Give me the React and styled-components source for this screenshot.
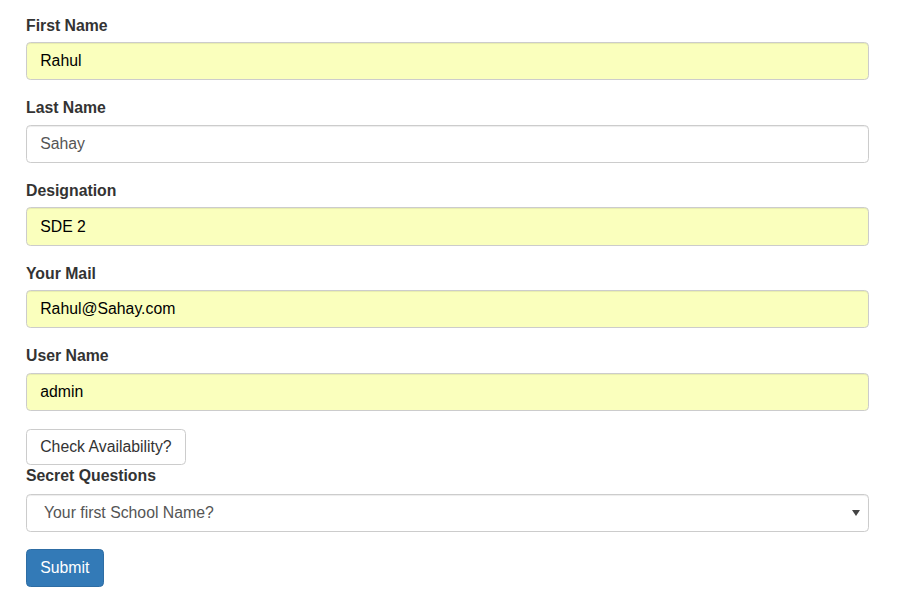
import React from 'react'
import styled, { createGlobalStyle } from 'styled-components'

const GlobalStyle = createGlobalStyle`
body{
  margin:0;
  background:#fff;
  font-family:"Liberation Sans", Arial, sans-serif;
  font-size:15.8px;
  color:#333;
}
*{box-sizing:border-box;}
`

const Form = styled.form`
padding:14.5px 0 0 26px;
width:869px;
`
const Group = styled.div`
margin-bottom:16.9px;
`
const Label = styled.label`
display:block;
font-weight:700;
line-height:22px;
margin-bottom:${p => p.tight ? '6.5px' : '5.5px'};
`
const Input = styled.input`
display:block;
width:100%;
height:38.3px;
padding:0 13.2px;
font:inherit;
color:${p => p.filled ? '#000' : '#555'};
background:${p => p.filled ? '#faffbd' : '#fff'};
border:1px solid #ccc;
border-radius:4.4px;
box-shadow:inset 0 1px 1px rgba(0,0,0,.075);
outline:none;
`
const Button = styled.button`
display:block;
margin-top:${p => p.primary ? '0' : '17.6px'};
height:${p => p.primary ? '38px' : '36.5px'};
padding:0 13.2px;
font:inherit;
line-height:1.4;
color:${p => p.primary ? '#fff' : '#333'};
background:${p => p.primary ? '#337ab7' : '#fff'};
border:1px solid ${p => p.primary ? '#2e6da4' : '#ccc'};
border-radius:4.4px;
cursor:pointer;
`
const SelectWrap = styled.div`
position:relative;
margin-bottom:17px;
&::after{
  content:'';
  position:absolute;
  right:9px;
  top:16px;
  border-left:4px solid transparent;
  border-right:4px solid transparent;
  border-top:6px solid #444;
  pointer-events:none;
}
`
const Select = styled.select`
display:block;
width:100%;
height:38px;
padding:0 17px;
font:inherit;
color:#555;
background:#fff;
border:1px solid #ccc;
border-radius:4.4px;
box-shadow:inset 0 1px 1px rgba(0,0,0,.075);
appearance:none;
outline:none;
`

const fields = [
  { label: 'First Name', value: 'Rahul', filled: true },
  { label: 'Last Name', value: 'Sahay', filled: false },
  { label: 'Designation', value: 'SDE 2', filled: true },
  { label: 'Your Mail', value: 'Rahul@Sahay.com', filled: true },
  { label: 'User Name', value: 'admin', filled: true },
]

const App = () => {
  return (
    <>
      <GlobalStyle />
      <Form onSubmit={e => e.preventDefault()}>
        {fields.map(f => (
          <Group key={f.label}>
            <Label>{f.label}</Label>
            <Input filled={f.filled} defaultValue={f.value} />
          </Group>
        ))}
        <Button type="button">Check Availability?</Button>
        <Label tight>Secret Questions</Label>
        <SelectWrap>
          <Select defaultValue="school">
            <option value="school">Your first School Name?</option>
            <option value="pet">Your first Pet Name?</option>
          </Select>
        </SelectWrap>
        <Button primary type="submit">Submit</Button>
      </Form>
    </>
  )
}

export default App
